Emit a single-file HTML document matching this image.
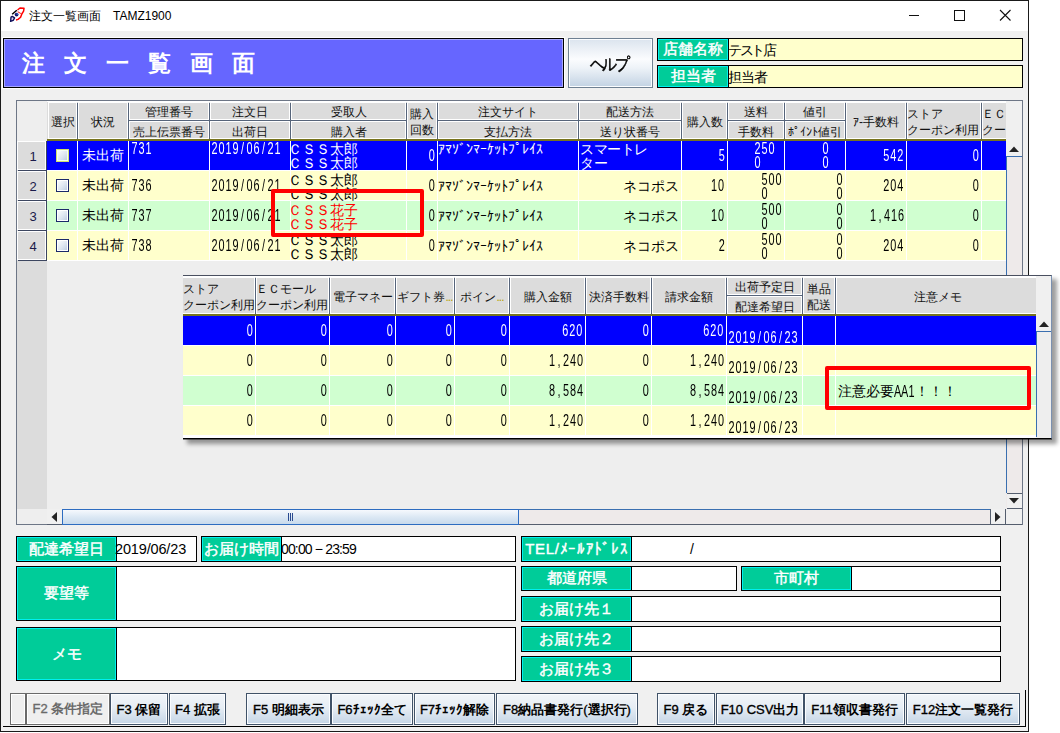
<!DOCTYPE html><html lang="ja"><head><meta charset="utf-8"><title>注文一覧画面</title><style>
*{margin:0;padding:0;box-sizing:border-box}
html,body{width:1060px;height:733px;overflow:hidden;background:#fff}
body{position:relative;font-family:"Liberation Sans",sans-serif;color:#000}
div{position:absolute}
svg{display:block}
.t{white-space:nowrap;line-height:14px;font-size:14px}
.nm{position:absolute;top:0;display:block;transform:scaleX(.68);white-space:nowrap;font-size:16px;line-height:14px;font-family:"Liberation Sans",sans-serif}
.nm i{font-style:normal;display:inline-block;width:10.3px;text-align:center}
.lbl{background:#00cc99;border:1px solid #000;box-shadow:inset 0 0 0 1px #00f0f0;color:#fff;font-weight:normal;-webkit-text-stroke:.45px #fff;font-size:15px;padding-bottom:2px;display:flex;align-items:center;justify-content:center;white-space:nowrap;line-height:15px}
.btn{border:1px solid #405268;background:linear-gradient(#f2f5f9,#e6edf4 45%,#c5d5e6);box-shadow:inset 0 0 0 1px #fbfdff;font-weight:bold;font-size:13px;display:flex;align-items:center;justify-content:center;white-space:nowrap;line-height:13px}
.hc{background:#dcdcdc;box-shadow:inset 0 0 0 1px #fff;font-size:12px;display:flex;align-items:center;justify-content:center;white-space:nowrap;overflow:hidden;line-height:14px;text-align:center;color:#111}
.cb{border:1px solid #1c2a6a;background:linear-gradient(135deg,#fff,#dde6f0 55%,#b9c9dd)}
</style></head><body>
<div style="left:0px;top:0px;width:1029px;height:732px;border:1px solid #1a1a1a;background:#f0f0f0"></div>
<div style="left:1px;top:1px;width:1027px;height:30px;background:#fff"></div>
<div style="left:0px;top:0px;width:30px;height:30px"><svg width="30" height="30" viewBox="0 0 30 30"><path d="M17.5 10 L20 8 L24 8.3 L23.6 11.2 L21.8 14 L20.6 17.2 L18 19.4 L16 20" fill="none" stroke="#f00" stroke-width="1.5" stroke-linejoin="round"/><path d="M17.6 11.6 L21 13.6" stroke="#f22" stroke-width="1.1"/><path d="M12.2 14.2 L16.8 10.2" stroke="#000" stroke-width="1.5"/><circle cx="16.6" cy="14.6" r="1.9" fill="#14146e"/><circle cx="17.2" cy="14" r=".7" fill="#3a8cff"/><path d="M11 17.2 L12.3 16.4 L14.6 17.9 L13.2 20.4 L10.6 21.4 Z" fill="#d8d4f0" stroke="#10105a" stroke-width="1.4" stroke-linejoin="round"/></svg></div>
<div class="t" style="left:29px;top:9px;width:200px;height:16px;font-size:12px;line-height:14px">注文一覧画面　TAMZ1900</div>
<div style="left:909px;top:15px;width:10px;height:1px;background:#111"></div>
<div style="left:954px;top:10px;width:11px;height:11px;border:1px solid #111"></div>
<div style="left:999px;top:9px;width:13px;height:13px"><svg width="13" height="13"><path d="M1 1 L11.5 11.5 M11.5 1 L1 11.5" stroke="#111" stroke-width="1.1"/></svg></div>
<div style="left:3px;top:38px;width:561px;height:50px;background:#6666ff;border:1px solid #000;box-shadow:inset 0 0 0 1px #a6a6ff,0 0 0 1px #fff"></div>
<div class="t" style="left:22px;top:50px;width:540px;height:28px;color:#fff;font-weight:bold;font-size:23px;letter-spacing:19px;line-height:26px">注文一覧画面</div>
<div class="btn" style="left:568px;top:38px;width:85px;height:50px;border-color:#6f8092;font-weight:normal;-webkit-text-stroke:.5px #000;font-size:16.5px;line-height:18px;letter-spacing:-2.5px;padding-right:3px;padding-top:2px;background:linear-gradient(#dbe4ee,#fbfcfe 42%,#eef3f8 60%,#c2d2e3)"><span style="display:inline-block;transform:scaleX(.87)">ヘルプ</span></div>
<div style="left:657px;top:38px;width:366px;height:23px;background:#ffffcc;border:1px solid #000"></div>
<div class="lbl" style="left:657px;top:38px;width:72px;height:23px;">店舗名称</div>
<div class="t" style="left:728px;top:42px;width:200px;height:16px;font-size:14px;line-height:16px"><span style="letter-spacing:-2.5px">テスト</span>店</div>
<div style="left:657px;top:65px;width:366px;height:23px;background:#ffffcc;border:1px solid #000"></div>
<div class="lbl" style="left:657px;top:65px;width:72px;height:23px;">担当者</div>
<div class="t" style="left:728px;top:69px;width:200px;height:16px;font-size:14px;line-height:16px"><span style="letter-spacing:-1px">担当者</span></div>
<div style="left:16px;top:100px;width:1007px;height:425px;border:1px solid #6d7686;background:#eeeeee;box-shadow:inset 1px 1px 0 #fff"></div>
<div style="left:17px;top:101px;width:30px;height:408px;background:#dcdcdc"></div>
<div style="left:17px;top:101px;width:30px;height:40px;background:#eeeeee"></div>
<div style="left:17px;top:509px;width:30px;height:15px;background:#eeeeee"></div>
<div style="left:17px;top:101px;width:989px;height:408px;overflow:hidden;">
<div style="left:30px;top:0px;width:1000px;height:40px;background:#dcdcdc;border-top:1px solid #fff"></div>
<div class="hc" style="left:31px;top:1px;width:29px;height:37px;padding-top:3px">選択</div>
<div class="hc" style="left:61px;top:1px;width:50px;height:37px;padding-top:3px">状況</div>
<div class="hc" style="left:112px;top:1px;width:80px;height:18px;padding-top:1px">管理番号</div>
<div class="hc" style="left:112px;top:20px;width:80px;height:18px;padding-top:3px">売上伝票番号</div>
<div style="left:112px;top:19px;width:80px;height:1px;background:#56647a"></div>
<div class="hc" style="left:193px;top:1px;width:80px;height:18px;padding-top:1px">注文日</div>
<div class="hc" style="left:193px;top:20px;width:80px;height:18px;padding-top:3px">出荷日</div>
<div style="left:193px;top:19px;width:80px;height:1px;background:#56647a"></div>
<div class="hc" style="left:274px;top:1px;width:115px;height:18px;padding-top:1px">受取人</div>
<div class="hc" style="left:274px;top:20px;width:115px;height:18px;padding-top:3px">購入者</div>
<div style="left:274px;top:19px;width:115px;height:1px;background:#56647a"></div>
<div class="hc" style="left:390px;top:1px;width:30px;height:37px;padding-top:2px;line-height:16px">購入<br>回数</div>
<div class="hc" style="left:421px;top:1px;width:140px;height:18px;padding-top:1px">注文サイト</div>
<div class="hc" style="left:421px;top:20px;width:140px;height:18px;padding-top:3px">支払方法</div>
<div style="left:421px;top:19px;width:140px;height:1px;background:#56647a"></div>
<div class="hc" style="left:562px;top:1px;width:102px;height:18px;padding-top:1px">配送方法</div>
<div class="hc" style="left:562px;top:20px;width:102px;height:18px;padding-top:3px">送り状番号</div>
<div style="left:562px;top:19px;width:102px;height:1px;background:#56647a"></div>
<div class="hc" style="left:665px;top:1px;width:45px;height:37px;padding-top:3px">購入数</div>
<div class="hc" style="left:711px;top:1px;width:56px;height:18px;padding-top:1px">送料</div>
<div class="hc" style="left:711px;top:20px;width:56px;height:18px;padding-top:3px">手数料</div>
<div style="left:711px;top:19px;width:56px;height:1px;background:#56647a"></div>
<div class="hc" style="left:768px;top:1px;width:60px;height:18px;padding-top:1px">値引</div>
<div class="hc" style="left:768px;top:20px;width:60px;height:18px;padding-top:3px">ﾎﾟｲﾝﾄ値引</div>
<div style="left:768px;top:19px;width:60px;height:1px;background:#56647a"></div>
<div class="hc" style="left:829px;top:1px;width:60px;height:37px;padding-top:3px">ｱ-手数料</div>
<div class="hc" style="left:890px;top:1px;width:74px;height:37px;padding-top:2px;line-height:16px;justify-content:flex-start;text-align:left">ストア<br>クーポン利用</div>
<div class="hc" style="left:965px;top:1px;width:58px;height:37px;padding-top:2px;line-height:16px;justify-content:flex-start;text-align:left">ＥＣ<br>クー</div>
<div style="left:60px;top:2px;width:1px;height:37px;background:#56647a"></div>
<div style="left:111px;top:2px;width:1px;height:37px;background:#56647a"></div>
<div style="left:192px;top:2px;width:1px;height:37px;background:#56647a"></div>
<div style="left:273px;top:2px;width:1px;height:37px;background:#56647a"></div>
<div style="left:389px;top:2px;width:1px;height:37px;background:#56647a"></div>
<div style="left:420px;top:2px;width:1px;height:37px;background:#56647a"></div>
<div style="left:561px;top:2px;width:1px;height:37px;background:#56647a"></div>
<div style="left:664px;top:2px;width:1px;height:37px;background:#56647a"></div>
<div style="left:710px;top:2px;width:1px;height:37px;background:#56647a"></div>
<div style="left:767px;top:2px;width:1px;height:37px;background:#56647a"></div>
<div style="left:828px;top:2px;width:1px;height:37px;background:#56647a"></div>
<div style="left:889px;top:2px;width:1px;height:37px;background:#56647a"></div>
<div style="left:964px;top:2px;width:1px;height:37px;background:#56647a"></div>
<div style="left:30px;top:38px;width:1000px;height:2px;background:#77741e"></div>
<div style="left:30px;top:40px;width:1000px;height:29px;background:#0000ff"></div>
<div style="left:30px;top:69px;width:1000px;height:1px;background:#fff"></div>
<div style="left:60px;top:40px;width:1px;height:30px;background:#fff"></div>
<div style="left:111px;top:40px;width:1px;height:30px;background:#fff"></div>
<div style="left:192px;top:40px;width:1px;height:30px;background:#fff"></div>
<div style="left:273px;top:40px;width:1px;height:30px;background:#fff"></div>
<div style="left:389px;top:40px;width:1px;height:30px;background:#fff"></div>
<div style="left:420px;top:40px;width:1px;height:30px;background:#fff"></div>
<div style="left:561px;top:40px;width:1px;height:30px;background:#fff"></div>
<div style="left:664px;top:40px;width:1px;height:30px;background:#fff"></div>
<div style="left:710px;top:40px;width:1px;height:30px;background:#fff"></div>
<div style="left:767px;top:40px;width:1px;height:30px;background:#fff"></div>
<div style="left:828px;top:40px;width:1px;height:30px;background:#fff"></div>
<div style="left:889px;top:40px;width:1px;height:30px;background:#fff"></div>
<div style="left:964px;top:40px;width:1px;height:30px;background:#fff"></div>
<div style="left:0px;top:40px;width:29px;height:29px;background:#dcdcdc;box-shadow:inset 0 0 0 1px #fff;font-size:13px;display:flex;align-items:center;justify-content:center;color:#1a1a4a;padding-left:3px;padding-top:2px">1</div>
<div style="left:1px;top:69px;width:29px;height:1px;background:#3c4660"></div>
<div style="left:29px;top:40px;width:1px;height:30px;background:#3c4660"></div>
<div class="cb" style="left:39px;top:48px;width:13px;height:13px;border-color:#d0e070;box-shadow:inset 0 0 0 1px #f4fff4"></div>
<div class="t" style="left:65px;top:47px;width:60px;height:16px;color:#fff">未出荷</div>
<div style="left:114px;top:41px;width:23px;height:16px;color:#fff"><span class="nm" style="left:0;transform-origin:0 0"><i>7</i><i>3</i><i>1</i></span></div>
<div style="left:194px;top:41px;width:72px;height:16px;color:#fff"><span class="nm" style="left:0;transform-origin:0 0"><i>2</i><i>0</i><i>1</i><i>9</i><i>/</i><i>0</i><i>6</i><i>/</i><i>2</i><i>1</i></span></div>
<div class="t" style="left:271px;top:41px;width:118px;height:30px;color:#fff">ＣＳＳ太郎<br>ＣＳＳ太郎</div>
<div style="left:411px;top:48px;width:7px;height:16px;color:#fff"><span class="nm" style="right:0;transform-origin:100% 0;text-align:right"><i>0</i></span></div>
<div class="t" style="left:421px;top:41px;width:140px;height:16px;color:#fff">ｱﾏｿﾞﾝﾏｰｹｯﾄﾌﾟﾚｲｽ</div>
<div class="t" style="left:563px;top:41px;width:100px;height:30px;color:#fff;letter-spacing:-.5px">スマートレ<br>ター</div>
<div style="left:701px;top:48px;width:7px;height:16px;color:#fff"><span class="nm" style="right:0;transform-origin:100% 0;text-align:right"><i>5</i></span></div>
<div style="left:737px;top:41px;width:23px;height:30px;color:#fff"><span class="nm" style="left:0;transform-origin:0 0"><i>2</i><i>5</i><i>0</i><br><i>0</i></span></div>
<div style="left:805px;top:41px;width:9px;height:30px;color:#fff"><span class="nm" style="left:0;transform-origin:0 0"><i>0</i><br><i>0</i></span></div>
<div style="left:866px;top:48px;width:21px;height:16px;color:#fff"><span class="nm" style="right:0;transform-origin:100% 0;text-align:right"><i>5</i><i>4</i><i>2</i></span></div>
<div style="left:955px;top:48px;width:7px;height:16px;color:#fff"><span class="nm" style="right:0;transform-origin:100% 0;text-align:right"><i>0</i></span></div>
<div style="left:30px;top:70px;width:1000px;height:29px;background:#ffffcc"></div>
<div style="left:30px;top:99px;width:1000px;height:1px;background:#fff"></div>
<div style="left:60px;top:70px;width:1px;height:30px;background:#fff"></div>
<div style="left:111px;top:70px;width:1px;height:30px;background:#fff"></div>
<div style="left:192px;top:70px;width:1px;height:30px;background:#fff"></div>
<div style="left:273px;top:70px;width:1px;height:30px;background:#fff"></div>
<div style="left:389px;top:70px;width:1px;height:30px;background:#fff"></div>
<div style="left:420px;top:70px;width:1px;height:30px;background:#fff"></div>
<div style="left:561px;top:70px;width:1px;height:30px;background:#fff"></div>
<div style="left:664px;top:70px;width:1px;height:30px;background:#fff"></div>
<div style="left:710px;top:70px;width:1px;height:30px;background:#fff"></div>
<div style="left:767px;top:70px;width:1px;height:30px;background:#fff"></div>
<div style="left:828px;top:70px;width:1px;height:30px;background:#fff"></div>
<div style="left:889px;top:70px;width:1px;height:30px;background:#fff"></div>
<div style="left:964px;top:70px;width:1px;height:30px;background:#fff"></div>
<div style="left:0px;top:70px;width:29px;height:29px;background:#dcdcdc;box-shadow:inset 0 0 0 1px #fff;font-size:13px;display:flex;align-items:center;justify-content:center;color:#1a1a4a;padding-left:3px;padding-top:2px">2</div>
<div style="left:1px;top:99px;width:29px;height:1px;background:#3c4660"></div>
<div style="left:29px;top:70px;width:1px;height:30px;background:#3c4660"></div>
<div class="cb" style="left:39px;top:78px;width:13px;height:13px;box-shadow:inset 0 0 0 1px #fff"></div>
<div class="t" style="left:65px;top:77px;width:60px;height:16px;color:#000">未出荷</div>
<div style="left:114px;top:78px;width:23px;height:16px;color:#000"><span class="nm" style="left:0;transform-origin:0 0"><i>7</i><i>3</i><i>6</i></span></div>
<div style="left:194px;top:78px;width:72px;height:16px;color:#000"><span class="nm" style="left:0;transform-origin:0 0"><i>2</i><i>0</i><i>1</i><i>9</i><i>/</i><i>0</i><i>6</i><i>/</i><i>2</i><i>1</i></span></div>
<div class="t" style="left:271px;top:72px;width:118px;height:30px;color:#000">ＣＳＳ太郎<br>ＣＳＳ太郎</div>
<div style="left:411px;top:78px;width:7px;height:16px;color:#000"><span class="nm" style="right:0;transform-origin:100% 0;text-align:right"><i>0</i></span></div>
<div class="t" style="left:421px;top:78px;width:140px;height:16px;color:#000">ｱﾏｿﾞﾝﾏｰｹｯﾄﾌﾟﾚｲｽ</div>
<div class="t" style="left:562px;top:78px;width:100px;height:16px;color:#000;text-align:right">ネコポス</div>
<div style="left:694px;top:78px;width:14px;height:16px;color:#000"><span class="nm" style="right:0;transform-origin:100% 0;text-align:right"><i>1</i><i>0</i></span></div>
<div style="left:744px;top:72px;width:23px;height:30px;color:#000"><span class="nm" style="left:0;transform-origin:0 0"><i>5</i><i>0</i><i>0</i><br><i>0</i></span></div>
<div style="left:819px;top:72px;width:9px;height:30px;color:#000"><span class="nm" style="left:0;transform-origin:0 0"><i>0</i><br><i>0</i></span></div>
<div style="left:866px;top:78px;width:21px;height:16px;color:#000"><span class="nm" style="right:0;transform-origin:100% 0;text-align:right"><i>2</i><i>0</i><i>4</i></span></div>
<div style="left:955px;top:78px;width:7px;height:16px;color:#000"><span class="nm" style="right:0;transform-origin:100% 0;text-align:right"><i>0</i></span></div>
<div style="left:30px;top:100px;width:1000px;height:29px;background:#d0ffd0"></div>
<div style="left:30px;top:129px;width:1000px;height:1px;background:#fff"></div>
<div style="left:60px;top:100px;width:1px;height:30px;background:#fff"></div>
<div style="left:111px;top:100px;width:1px;height:30px;background:#fff"></div>
<div style="left:192px;top:100px;width:1px;height:30px;background:#fff"></div>
<div style="left:273px;top:100px;width:1px;height:30px;background:#fff"></div>
<div style="left:389px;top:100px;width:1px;height:30px;background:#fff"></div>
<div style="left:420px;top:100px;width:1px;height:30px;background:#fff"></div>
<div style="left:561px;top:100px;width:1px;height:30px;background:#fff"></div>
<div style="left:664px;top:100px;width:1px;height:30px;background:#fff"></div>
<div style="left:710px;top:100px;width:1px;height:30px;background:#fff"></div>
<div style="left:767px;top:100px;width:1px;height:30px;background:#fff"></div>
<div style="left:828px;top:100px;width:1px;height:30px;background:#fff"></div>
<div style="left:889px;top:100px;width:1px;height:30px;background:#fff"></div>
<div style="left:964px;top:100px;width:1px;height:30px;background:#fff"></div>
<div style="left:0px;top:100px;width:29px;height:29px;background:#dcdcdc;box-shadow:inset 0 0 0 1px #fff;font-size:13px;display:flex;align-items:center;justify-content:center;color:#1a1a4a;padding-left:3px;padding-top:2px">3</div>
<div style="left:1px;top:129px;width:29px;height:1px;background:#3c4660"></div>
<div style="left:29px;top:100px;width:1px;height:30px;background:#3c4660"></div>
<div class="cb" style="left:39px;top:108px;width:13px;height:13px;box-shadow:inset 0 0 0 1px #fff"></div>
<div class="t" style="left:65px;top:107px;width:60px;height:16px;color:#000">未出荷</div>
<div style="left:114px;top:108px;width:23px;height:16px;color:#000"><span class="nm" style="left:0;transform-origin:0 0"><i>7</i><i>3</i><i>7</i></span></div>
<div style="left:194px;top:108px;width:72px;height:16px;color:#000"><span class="nm" style="left:0;transform-origin:0 0"><i>2</i><i>0</i><i>1</i><i>9</i><i>/</i><i>0</i><i>6</i><i>/</i><i>2</i><i>1</i></span></div>
<div class="t" style="left:271px;top:102px;width:118px;height:30px;color:#ff0000">ＣＳＳ花子<br>ＣＳＳ花子</div>
<div style="left:411px;top:108px;width:7px;height:16px;color:#000"><span class="nm" style="right:0;transform-origin:100% 0;text-align:right"><i>0</i></span></div>
<div class="t" style="left:421px;top:108px;width:140px;height:16px;color:#000">ｱﾏｿﾞﾝﾏｰｹｯﾄﾌﾟﾚｲｽ</div>
<div class="t" style="left:562px;top:108px;width:100px;height:16px;color:#000;text-align:right">ネコポス</div>
<div style="left:694px;top:108px;width:14px;height:16px;color:#000"><span class="nm" style="right:0;transform-origin:100% 0;text-align:right"><i>1</i><i>0</i></span></div>
<div style="left:744px;top:102px;width:23px;height:30px;color:#000"><span class="nm" style="left:0;transform-origin:0 0"><i>5</i><i>0</i><i>0</i><br><i>0</i></span></div>
<div style="left:819px;top:102px;width:9px;height:30px;color:#000"><span class="nm" style="left:0;transform-origin:0 0"><i>0</i><br><i>0</i></span></div>
<div style="left:852px;top:108px;width:35px;height:16px;color:#000"><span class="nm" style="right:0;transform-origin:100% 0;text-align:right"><i>1</i><i>,</i><i>4</i><i>1</i><i>6</i></span></div>
<div style="left:955px;top:108px;width:7px;height:16px;color:#000"><span class="nm" style="right:0;transform-origin:100% 0;text-align:right"><i>0</i></span></div>
<div style="left:30px;top:130px;width:1000px;height:29px;background:#ffffcc"></div>
<div style="left:30px;top:159px;width:1000px;height:1px;background:#fff"></div>
<div style="left:60px;top:130px;width:1px;height:30px;background:#fff"></div>
<div style="left:111px;top:130px;width:1px;height:30px;background:#fff"></div>
<div style="left:192px;top:130px;width:1px;height:30px;background:#fff"></div>
<div style="left:273px;top:130px;width:1px;height:30px;background:#fff"></div>
<div style="left:389px;top:130px;width:1px;height:30px;background:#fff"></div>
<div style="left:420px;top:130px;width:1px;height:30px;background:#fff"></div>
<div style="left:561px;top:130px;width:1px;height:30px;background:#fff"></div>
<div style="left:664px;top:130px;width:1px;height:30px;background:#fff"></div>
<div style="left:710px;top:130px;width:1px;height:30px;background:#fff"></div>
<div style="left:767px;top:130px;width:1px;height:30px;background:#fff"></div>
<div style="left:828px;top:130px;width:1px;height:30px;background:#fff"></div>
<div style="left:889px;top:130px;width:1px;height:30px;background:#fff"></div>
<div style="left:964px;top:130px;width:1px;height:30px;background:#fff"></div>
<div style="left:0px;top:130px;width:29px;height:29px;background:#dcdcdc;box-shadow:inset 0 0 0 1px #fff;font-size:13px;display:flex;align-items:center;justify-content:center;color:#1a1a4a;padding-left:3px;padding-top:2px">4</div>
<div style="left:1px;top:159px;width:29px;height:1px;background:#3c4660"></div>
<div style="left:29px;top:130px;width:1px;height:30px;background:#3c4660"></div>
<div class="cb" style="left:39px;top:138px;width:13px;height:13px;box-shadow:inset 0 0 0 1px #fff"></div>
<div class="t" style="left:65px;top:137px;width:60px;height:16px;color:#000">未出荷</div>
<div style="left:114px;top:138px;width:23px;height:16px;color:#000"><span class="nm" style="left:0;transform-origin:0 0"><i>7</i><i>3</i><i>8</i></span></div>
<div style="left:194px;top:138px;width:72px;height:16px;color:#000"><span class="nm" style="left:0;transform-origin:0 0"><i>2</i><i>0</i><i>1</i><i>9</i><i>/</i><i>0</i><i>6</i><i>/</i><i>2</i><i>1</i></span></div>
<div class="t" style="left:271px;top:132px;width:118px;height:30px;color:#000">ＣＳＳ太郎<br>ＣＳＳ太郎</div>
<div style="left:411px;top:138px;width:7px;height:16px;color:#000"><span class="nm" style="right:0;transform-origin:100% 0;text-align:right"><i>0</i></span></div>
<div class="t" style="left:421px;top:138px;width:140px;height:16px;color:#000">ｱﾏｿﾞﾝﾏｰｹｯﾄﾌﾟﾚｲｽ</div>
<div class="t" style="left:562px;top:138px;width:100px;height:16px;color:#000;text-align:right">ネコポス</div>
<div style="left:701px;top:138px;width:7px;height:16px;color:#000"><span class="nm" style="right:0;transform-origin:100% 0;text-align:right"><i>2</i></span></div>
<div style="left:744px;top:132px;width:23px;height:30px;color:#000"><span class="nm" style="left:0;transform-origin:0 0"><i>5</i><i>0</i><i>0</i><br><i>0</i></span></div>
<div style="left:819px;top:132px;width:9px;height:30px;color:#000"><span class="nm" style="left:0;transform-origin:0 0"><i>0</i><br><i>0</i></span></div>
<div style="left:866px;top:138px;width:21px;height:16px;color:#000"><span class="nm" style="right:0;transform-origin:100% 0;text-align:right"><i>2</i><i>0</i><i>4</i></span></div>
<div style="left:955px;top:138px;width:7px;height:16px;color:#000"><span class="nm" style="right:0;transform-origin:100% 0;text-align:right"><i>0</i></span></div>
</div>
<div style="left:1006px;top:101px;width:16px;height:408px;background:#eeeaea"></div>
<div style="left:1006px;top:101px;width:16px;height:40px;background:#f0f0f0"></div>
<div style="left:1006px;top:141px;width:16px;height:16px;background:#f0f0f0;border-bottom:1px solid #3a6fb0"></div>
<div style="left:1009px;top:146px;width:10px;height:6px"><svg width="10" height="6"><path d="M0 6 L5 0.5 L10 6Z" fill="#222"/></svg></div>
<div style="left:1006px;top:157px;width:1px;height:336px;background:#3a6fb0"></div>
<div style="left:1007px;top:493px;width:15px;height:16px;background:#f0f0f0;border-top:1px solid #555e6e;border-bottom:1px solid #555e6e"></div>
<div style="left:1009px;top:498px;width:10px;height:6px"><svg width="10" height="6"><path d="M0 0 L5 5.5 L10 0Z" fill="#222"/></svg></div>
<div style="left:47px;top:509px;width:959px;height:16px;background:#eeeaea;border-bottom:1px solid #555e6e;border-top:1px solid #3a6fb0"></div>
<div style="left:47px;top:509px;width:16px;height:16px;background:#f0f0f0;border-right:1px solid #555e6e;border-bottom:1px solid #555e6e"></div>
<div style="left:51px;top:512px;width:6px;height:10px"><svg width="6" height="10"><path d="M6 0 L0.5 5 L6 10Z" fill="#222"/></svg></div>
<div style="left:62px;top:509px;width:457px;height:16px;border:1px solid #2d6cc0;background:linear-gradient(#f6f9fd,#dce8f4 50%,#c8daec)"></div>
<div style="left:288px;top:513px;width:5px;height:8px;border-left:1px solid #2a4a90;border-right:1px solid #2a4a90"></div>
<div style="left:290px;top:513px;width:1px;height:8px;background:#2a4a90"></div>
<div style="left:990px;top:509px;width:16px;height:16px;background:#f0f0f0;border-left:1px solid #555e6e;border-right:1px solid #555e6e;border-bottom:1px solid #555e6e"></div>
<div style="left:995px;top:512px;width:6px;height:10px"><svg width="6" height="10"><path d="M0 0 L5.5 5 L0 10Z" fill="#222"/></svg></div>
<div style="left:1006px;top:509px;width:16px;height:16px;background:#f0f0f0;border-bottom:1px solid #555e6e"></div>
<div style="left:271px;top:189px;width:153px;height:48px;border:4px solid #ff0000;border-radius:2px"></div>
<div style="left:187px;top:279px;width:870px;height:165px;background:rgba(0,0,0,.38);filter:blur(2px)"></div>
<div style="left:183px;top:275px;width:869px;height:164px;background:#f0f0f0;border-top:1px solid #4a5060;border-right:1px solid #7a90b0;border-bottom:1px solid #000;box-shadow:0 1px 0 rgba(0,0,0,.45)"></div>
<div style="left:183px;top:276px;width:853px;height:162px;overflow:hidden;background:#fff">
<div style="left:0px;top:0px;width:860px;height:40px;background:#dcdcdc;border-top:1px solid #fff"></div>
<div class="hc" style="left:0px;top:1px;width:72px;height:37px;padding-top:2px;line-height:16px;justify-content:flex-start;text-align:left;box-shadow:inset 0 1px 0 #fff,inset 0 -1px 0 #fff,inset -1px 0 0 #fff">ストア<br>クーポン利用</div>
<div class="hc" style="left:73px;top:1px;width:73px;height:37px;padding-top:2px;line-height:16px;justify-content:flex-start;text-align:left">ＥＣモール<br>クーポン利用</div>
<div class="hc" style="left:147px;top:1px;width:65px;height:37px;padding-top:3px">電子マネー</div>
<div class="hc" style="left:213px;top:1px;width:58px;height:37px;padding-top:3px">ギフト券<span style="color:#b8a400;letter-spacing:-1px">...</span></div>
<div class="hc" style="left:272px;top:1px;width:54px;height:37px;padding-top:3px">ポイン<span style="color:#b8a400;letter-spacing:-1px">...</span></div>
<div class="hc" style="left:327px;top:1px;width:75px;height:37px;padding-top:3px">購入金額</div>
<div class="hc" style="left:403px;top:1px;width:65px;height:37px;padding-top:3px">決済手数料</div>
<div class="hc" style="left:469px;top:1px;width:74px;height:37px;padding-top:3px">請求金額</div>
<div class="hc" style="left:544px;top:1px;width:75px;height:18px;padding-top:1px">出荷予定日</div>
<div class="hc" style="left:544px;top:20px;width:75px;height:18px;padding-top:3px">配達希望日</div>
<div style="left:544px;top:19px;width:75px;height:1px;background:#56647a"></div>
<div class="hc" style="left:620px;top:1px;width:32px;height:37px;padding-top:2px;line-height:16px">単品<br>配送</div>
<div class="hc" style="left:653px;top:1px;width:204px;height:37px;padding-top:3px">注意メモ</div>
<div style="left:72px;top:2px;width:1px;height:37px;background:#56647a"></div>
<div style="left:146px;top:2px;width:1px;height:37px;background:#56647a"></div>
<div style="left:212px;top:2px;width:1px;height:37px;background:#56647a"></div>
<div style="left:271px;top:2px;width:1px;height:37px;background:#56647a"></div>
<div style="left:326px;top:2px;width:1px;height:37px;background:#56647a"></div>
<div style="left:402px;top:2px;width:1px;height:37px;background:#56647a"></div>
<div style="left:468px;top:2px;width:1px;height:37px;background:#56647a"></div>
<div style="left:543px;top:2px;width:1px;height:37px;background:#56647a"></div>
<div style="left:619px;top:2px;width:1px;height:37px;background:#56647a"></div>
<div style="left:652px;top:2px;width:1px;height:37px;background:#56647a"></div>
<div style="left:0px;top:38px;width:860px;height:2px;background:#77741e"></div>
<div style="left:0px;top:40px;width:860px;height:29px;background:#0000ff"></div>
<div style="left:0px;top:69px;width:860px;height:1px;background:#fff"></div>
<div style="left:72px;top:40px;width:1px;height:30px;background:#fff"></div>
<div style="left:146px;top:40px;width:1px;height:30px;background:#fff"></div>
<div style="left:212px;top:40px;width:1px;height:30px;background:#fff"></div>
<div style="left:271px;top:40px;width:1px;height:30px;background:#fff"></div>
<div style="left:326px;top:40px;width:1px;height:30px;background:#fff"></div>
<div style="left:402px;top:40px;width:1px;height:30px;background:#fff"></div>
<div style="left:468px;top:40px;width:1px;height:30px;background:#fff"></div>
<div style="left:543px;top:40px;width:1px;height:30px;background:#fff"></div>
<div style="left:619px;top:40px;width:1px;height:30px;background:#fff"></div>
<div style="left:652px;top:40px;width:1px;height:30px;background:#fff"></div>
<div style="left:63px;top:48px;width:7px;height:16px;color:#fff"><span class="nm" style="right:0;transform-origin:100% 0;text-align:right"><i>0</i></span></div>
<div style="left:137px;top:48px;width:7px;height:16px;color:#fff"><span class="nm" style="right:0;transform-origin:100% 0;text-align:right"><i>0</i></span></div>
<div style="left:203px;top:48px;width:7px;height:16px;color:#fff"><span class="nm" style="right:0;transform-origin:100% 0;text-align:right"><i>0</i></span></div>
<div style="left:262px;top:48px;width:7px;height:16px;color:#fff"><span class="nm" style="right:0;transform-origin:100% 0;text-align:right"><i>0</i></span></div>
<div style="left:317px;top:48px;width:7px;height:16px;color:#fff"><span class="nm" style="right:0;transform-origin:100% 0;text-align:right"><i>0</i></span></div>
<div style="left:379px;top:48px;width:21px;height:16px;color:#fff"><span class="nm" style="right:0;transform-origin:100% 0;text-align:right"><i>6</i><i>2</i><i>0</i></span></div>
<div style="left:459px;top:48px;width:7px;height:16px;color:#fff"><span class="nm" style="right:0;transform-origin:100% 0;text-align:right"><i>0</i></span></div>
<div style="left:520px;top:48px;width:21px;height:16px;color:#fff"><span class="nm" style="right:0;transform-origin:100% 0;text-align:right"><i>6</i><i>2</i><i>0</i></span></div>
<div style="left:545px;top:55px;width:72px;height:16px;color:#fff"><span class="nm" style="left:0;transform-origin:0 0"><i>2</i><i>0</i><i>1</i><i>9</i><i>/</i><i>0</i><i>6</i><i>/</i><i>2</i><i>3</i></span></div>
<div style="left:0px;top:70px;width:860px;height:29px;background:#ffffcc"></div>
<div style="left:0px;top:99px;width:860px;height:1px;background:#fff"></div>
<div style="left:72px;top:70px;width:1px;height:30px;background:#fff"></div>
<div style="left:146px;top:70px;width:1px;height:30px;background:#fff"></div>
<div style="left:212px;top:70px;width:1px;height:30px;background:#fff"></div>
<div style="left:271px;top:70px;width:1px;height:30px;background:#fff"></div>
<div style="left:326px;top:70px;width:1px;height:30px;background:#fff"></div>
<div style="left:402px;top:70px;width:1px;height:30px;background:#fff"></div>
<div style="left:468px;top:70px;width:1px;height:30px;background:#fff"></div>
<div style="left:543px;top:70px;width:1px;height:30px;background:#fff"></div>
<div style="left:619px;top:70px;width:1px;height:30px;background:#fff"></div>
<div style="left:652px;top:70px;width:1px;height:30px;background:#fff"></div>
<div style="left:63px;top:78px;width:7px;height:16px;color:#000"><span class="nm" style="right:0;transform-origin:100% 0;text-align:right"><i>0</i></span></div>
<div style="left:137px;top:78px;width:7px;height:16px;color:#000"><span class="nm" style="right:0;transform-origin:100% 0;text-align:right"><i>0</i></span></div>
<div style="left:203px;top:78px;width:7px;height:16px;color:#000"><span class="nm" style="right:0;transform-origin:100% 0;text-align:right"><i>0</i></span></div>
<div style="left:262px;top:78px;width:7px;height:16px;color:#000"><span class="nm" style="right:0;transform-origin:100% 0;text-align:right"><i>0</i></span></div>
<div style="left:317px;top:78px;width:7px;height:16px;color:#000"><span class="nm" style="right:0;transform-origin:100% 0;text-align:right"><i>0</i></span></div>
<div style="left:365px;top:78px;width:35px;height:16px;color:#000"><span class="nm" style="right:0;transform-origin:100% 0;text-align:right"><i>1</i><i>,</i><i>2</i><i>4</i><i>0</i></span></div>
<div style="left:459px;top:78px;width:7px;height:16px;color:#000"><span class="nm" style="right:0;transform-origin:100% 0;text-align:right"><i>0</i></span></div>
<div style="left:506px;top:78px;width:35px;height:16px;color:#000"><span class="nm" style="right:0;transform-origin:100% 0;text-align:right"><i>1</i><i>,</i><i>2</i><i>4</i><i>0</i></span></div>
<div style="left:545px;top:85px;width:72px;height:16px;color:#000"><span class="nm" style="left:0;transform-origin:0 0"><i>2</i><i>0</i><i>1</i><i>9</i><i>/</i><i>0</i><i>6</i><i>/</i><i>2</i><i>3</i></span></div>
<div style="left:0px;top:100px;width:860px;height:29px;background:#d0ffd0"></div>
<div style="left:0px;top:129px;width:860px;height:1px;background:#fff"></div>
<div style="left:72px;top:100px;width:1px;height:30px;background:#fff"></div>
<div style="left:146px;top:100px;width:1px;height:30px;background:#fff"></div>
<div style="left:212px;top:100px;width:1px;height:30px;background:#fff"></div>
<div style="left:271px;top:100px;width:1px;height:30px;background:#fff"></div>
<div style="left:326px;top:100px;width:1px;height:30px;background:#fff"></div>
<div style="left:402px;top:100px;width:1px;height:30px;background:#fff"></div>
<div style="left:468px;top:100px;width:1px;height:30px;background:#fff"></div>
<div style="left:543px;top:100px;width:1px;height:30px;background:#fff"></div>
<div style="left:619px;top:100px;width:1px;height:30px;background:#fff"></div>
<div style="left:652px;top:100px;width:1px;height:30px;background:#fff"></div>
<div style="left:63px;top:108px;width:7px;height:16px;color:#000"><span class="nm" style="right:0;transform-origin:100% 0;text-align:right"><i>0</i></span></div>
<div style="left:137px;top:108px;width:7px;height:16px;color:#000"><span class="nm" style="right:0;transform-origin:100% 0;text-align:right"><i>0</i></span></div>
<div style="left:203px;top:108px;width:7px;height:16px;color:#000"><span class="nm" style="right:0;transform-origin:100% 0;text-align:right"><i>0</i></span></div>
<div style="left:262px;top:108px;width:7px;height:16px;color:#000"><span class="nm" style="right:0;transform-origin:100% 0;text-align:right"><i>0</i></span></div>
<div style="left:317px;top:108px;width:7px;height:16px;color:#000"><span class="nm" style="right:0;transform-origin:100% 0;text-align:right"><i>0</i></span></div>
<div style="left:365px;top:108px;width:35px;height:16px;color:#000"><span class="nm" style="right:0;transform-origin:100% 0;text-align:right"><i>8</i><i>,</i><i>5</i><i>8</i><i>4</i></span></div>
<div style="left:459px;top:108px;width:7px;height:16px;color:#000"><span class="nm" style="right:0;transform-origin:100% 0;text-align:right"><i>0</i></span></div>
<div style="left:506px;top:108px;width:35px;height:16px;color:#000"><span class="nm" style="right:0;transform-origin:100% 0;text-align:right"><i>8</i><i>,</i><i>5</i><i>8</i><i>4</i></span></div>
<div style="left:545px;top:115px;width:72px;height:16px;color:#000"><span class="nm" style="left:0;transform-origin:0 0"><i>2</i><i>0</i><i>1</i><i>9</i><i>/</i><i>0</i><i>6</i><i>/</i><i>2</i><i>3</i></span></div>
<div class="t" style="left:655px;top:108px;width:180px;height:16px;color:#000">注意必要<span style="display:inline-block;position:relative;width:21px;height:14px;vertical-align:top"><span class="nm" style="left:0;top:1px;transform-origin:0 0"><i>A</i><i>A</i><i>1</i></span></span>！！！</div>
<div style="left:0px;top:130px;width:860px;height:29px;background:#ffffcc"></div>
<div style="left:0px;top:159px;width:860px;height:1px;background:#fff"></div>
<div style="left:72px;top:130px;width:1px;height:30px;background:#fff"></div>
<div style="left:146px;top:130px;width:1px;height:30px;background:#fff"></div>
<div style="left:212px;top:130px;width:1px;height:30px;background:#fff"></div>
<div style="left:271px;top:130px;width:1px;height:30px;background:#fff"></div>
<div style="left:326px;top:130px;width:1px;height:30px;background:#fff"></div>
<div style="left:402px;top:130px;width:1px;height:30px;background:#fff"></div>
<div style="left:468px;top:130px;width:1px;height:30px;background:#fff"></div>
<div style="left:543px;top:130px;width:1px;height:30px;background:#fff"></div>
<div style="left:619px;top:130px;width:1px;height:30px;background:#fff"></div>
<div style="left:652px;top:130px;width:1px;height:30px;background:#fff"></div>
<div style="left:63px;top:138px;width:7px;height:16px;color:#000"><span class="nm" style="right:0;transform-origin:100% 0;text-align:right"><i>0</i></span></div>
<div style="left:137px;top:138px;width:7px;height:16px;color:#000"><span class="nm" style="right:0;transform-origin:100% 0;text-align:right"><i>0</i></span></div>
<div style="left:203px;top:138px;width:7px;height:16px;color:#000"><span class="nm" style="right:0;transform-origin:100% 0;text-align:right"><i>0</i></span></div>
<div style="left:262px;top:138px;width:7px;height:16px;color:#000"><span class="nm" style="right:0;transform-origin:100% 0;text-align:right"><i>0</i></span></div>
<div style="left:317px;top:138px;width:7px;height:16px;color:#000"><span class="nm" style="right:0;transform-origin:100% 0;text-align:right"><i>0</i></span></div>
<div style="left:365px;top:138px;width:35px;height:16px;color:#000"><span class="nm" style="right:0;transform-origin:100% 0;text-align:right"><i>1</i><i>,</i><i>2</i><i>4</i><i>0</i></span></div>
<div style="left:459px;top:138px;width:7px;height:16px;color:#000"><span class="nm" style="right:0;transform-origin:100% 0;text-align:right"><i>0</i></span></div>
<div style="left:506px;top:138px;width:35px;height:16px;color:#000"><span class="nm" style="right:0;transform-origin:100% 0;text-align:right"><i>1</i><i>,</i><i>2</i><i>4</i><i>0</i></span></div>
<div style="left:545px;top:145px;width:72px;height:16px;color:#000"><span class="nm" style="left:0;transform-origin:0 0"><i>2</i><i>0</i><i>1</i><i>9</i><i>/</i><i>0</i><i>6</i><i>/</i><i>2</i><i>3</i></span></div>
</div>
<div style="left:1036px;top:276px;width:15px;height:161px;background:#eeeeee;border-left:1px solid #3a6fb0"></div>
<div style="left:1036px;top:276px;width:15px;height:40px;background:#f0f0f0"></div>
<div style="left:1036px;top:316px;width:15px;height:16px;background:#f0f0f0;border-bottom:1px solid #3a6fb0"></div>
<div style="left:1039px;top:321px;width:10px;height:6px"><svg width="10" height="6"><path d="M0 6 L5 0.5 L10 6Z" fill="#222"/></svg></div>
<div style="left:825px;top:366px;width:206px;height:44px;border:4px solid #ff0000;border-radius:2px"></div>
<div style="left:16px;top:536px;width:181px;height:26px;background:#fff;border:1px solid #000"></div>
<div class="lbl" style="left:16px;top:536px;width:101px;height:26px;">配達希望日</div>
<div class="t" style="left:116px;top:541px;width:80px;height:16px;font-size:14px;line-height:16px;letter-spacing:-.15px;font-size:14.5px;margin-left:-1px">2019/06/23</div>
<div style="left:201px;top:536px;width:315px;height:26px;background:#fff;border:1px solid #000"></div>
<div class="lbl" style="left:201px;top:536px;width:81px;height:26px;">お届け時間</div>
<div class="t" style="left:281px;top:541px;width:234px;height:16px;font-size:14px;line-height:16px;letter-spacing:-.85px">00:00 − 23:59</div>
<div style="left:16px;top:566px;width:500px;height:55px;background:#fff;border:1px solid #000"></div>
<div class="lbl" style="left:16px;top:566px;width:101px;height:55px;">要望等</div>
<div style="left:16px;top:627px;width:500px;height:54px;background:#fff;border:1px solid #000"></div>
<div class="lbl" style="left:16px;top:627px;width:101px;height:54px;">メモ</div>
<div style="left:521px;top:536px;width:480px;height:26px;background:#fff;border:1px solid #000"></div>
<div class="lbl" style="left:521px;top:536px;width:111px;height:26px;"><span style="letter-spacing:.7px;margin-right:-.7px">TEL/ﾒｰﾙｱﾄﾞﾚｽ</span></div>
<div class="t" style="left:690px;top:541px;width:20px;height:16px;font-size:14px;line-height:16px">/</div>
<div style="left:521px;top:566px;width:216px;height:25px;background:#fff;border:1px solid #000"></div>
<div class="lbl" style="left:521px;top:566px;width:111px;height:25px;">都道府県</div>
<div style="left:741px;top:566px;width:260px;height:25px;background:#fff;border:1px solid #000"></div>
<div class="lbl" style="left:741px;top:566px;width:111px;height:25px;">市町村</div>
<div style="left:521px;top:596px;width:480px;height:26px;background:#fff;border:1px solid #000"></div>
<div class="lbl" style="left:521px;top:596px;width:111px;height:26px;">お届け先１</div>
<div style="left:521px;top:626px;width:480px;height:26px;background:#fff;border:1px solid #000"></div>
<div class="lbl" style="left:521px;top:626px;width:111px;height:26px;">お届け先２</div>
<div style="left:521px;top:656px;width:480px;height:26px;background:#fff;border:1px solid #000"></div>
<div class="lbl" style="left:521px;top:656px;width:111px;height:26px;">お届け先３</div>
<div style="left:3px;top:726px;width:1023px;height:1px;background:#000"></div>
<div style="left:1025px;top:690px;width:1px;height:37px;background:#000"></div>
<div style="left:10px;top:693px;width:16px;height:32px;background:#efefef;border:1px solid #6a6a6a;box-shadow:inset 0 0 0 1px #fff;color:#6a6a6a;font-weight:bold;font-size:13px;display:flex;align-items:center;justify-content:center;white-space:nowrap"><span></span></div>
<div style="left:26px;top:693px;width:84px;height:32px;background:#efefef;border:1px solid #6a6a6a;box-shadow:inset 0 0 0 1px #fff;color:#6a6a6a;font-weight:bold;font-size:13px;display:flex;align-items:center;justify-content:center;white-space:nowrap"><span><span style="font-weight:normal;-webkit-text-stroke:.35px currentColor">F2 </span>条件指定</span></div>
<div class="btn" style="left:110px;top:693px;width:58px;height:32px;"><span><span style="font-weight:normal;-webkit-text-stroke:.35px currentColor">F3 </span>保留</span></div>
<div class="btn" style="left:169px;top:693px;width:57px;height:32px;"><span><span style="font-weight:normal;-webkit-text-stroke:.35px currentColor">F4 </span>拡張</span></div>
<div class="btn" style="left:246px;top:693px;width:85px;height:32px;"><span><span style="font-weight:normal;-webkit-text-stroke:.35px currentColor">F5 </span>明細表示</span></div>
<div class="btn" style="left:331px;top:693px;width:82px;height:32px;"><span><span style="font-weight:normal;-webkit-text-stroke:.35px currentColor">F6</span>ﾁｪｯｸ全て</span></div>
<div class="btn" style="left:414px;top:693px;width:81px;height:32px;"><span><span style="font-weight:normal;-webkit-text-stroke:.35px currentColor">F7</span>ﾁｪｯｸ解除</span></div>
<div class="btn" style="left:496px;top:693px;width:142px;height:32px;"><span><span style="font-weight:normal;-webkit-text-stroke:.35px currentColor">F8</span>納品書発行<span style="font-weight:normal;-webkit-text-stroke:.35px currentColor">(</span>選択行<span style="font-weight:normal;-webkit-text-stroke:.35px currentColor">)</span></span></div>
<div class="btn" style="left:657px;top:693px;width:58px;height:32px;"><span><span style="font-weight:normal;-webkit-text-stroke:.35px currentColor">F9 </span>戻る</span></div>
<div class="btn" style="left:716px;top:693px;width:88px;height:32px;"><span><span style="font-weight:normal;-webkit-text-stroke:.35px currentColor">F10 CSV</span>出力</span></div>
<div class="btn" style="left:804px;top:693px;width:101px;height:32px;"><span><span style="font-weight:normal;-webkit-text-stroke:.35px currentColor">F11</span>領収書発行</span></div>
<div class="btn" style="left:906px;top:693px;width:114px;height:32px;"><span><span style="font-weight:normal;-webkit-text-stroke:.35px currentColor">F12</span>注文一覧発行</span></div>
</body></html>
